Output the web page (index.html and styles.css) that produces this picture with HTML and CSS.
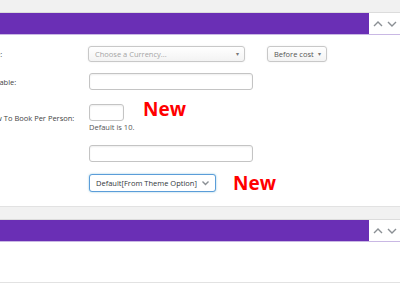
FILE: index.html
```html
<!DOCTYPE html>
<html lang="en">
<head>
  <meta charset="UTF-8" />
  <meta name="viewport" content="width=device-width, initial-scale=1.0"/>
  <title>Tour Options</title>
  <link rel="stylesheet" href="styles.css">
</head>
<body>
  <div class="postbox">
    <div class="postbox-top"></div>
    <div class="postbox-head">
      <div class="postbox-title"></div>
      <div class="postbox-arrows">
        <svg width="12" height="8" viewBox="0 0 12 8"><polyline points="2,6 6,2 10,6" /></svg>
        <svg width="12" height="8" viewBox="0 0 12 8"><polyline points="2,2 6,6 10,2" /></svg>
      </div>
    </div>

    <div class="postbox-body">
      <div class="row row-currency">
        <label>Price:</label>
        <div class="select select-wide"><span class="placeholder">Choose a Currency...</span><span class="caret">▾</span></div>
        <div class="select select-small"><span>Before cost</span><span class="caret">▾</span></div>
      </div>

      <div class="row row-seats">
        <label>Available:</label>
        <input type="text" class="input input-wide">
      </div>

      <div class="row row-allow">
        <label>Allow To Book Per Person:</label>
        <div class="field">
          <div class="field-line">
            <input type="text" class="input input-tiny">
            <span class="new-badge">New</span>
          </div>
          <p class="description">Default is 10.</p>
        </div>
      </div>

      <div class="row row-link">
        <label>Tag:</label>
        <input type="text" class="input input-wide">
      </div>

      <div class="row row-layout">
        <label>Lay:</label>
        <div class="select select-focus"><span>Default[From Theme Option]</span>
          <svg class="chev" width="9" height="6" viewBox="0 0 9 6"><polyline points="1.5,1.5 4.5,4.5 7.5,1.5" /></svg>
        </div>
        <span class="new-badge new-badge-2">New</span>
      </div>
    </div>
  </div>

  <div class="postbox">
    <div class="postbox-top"></div>
    <div class="postbox-head">
      <div class="postbox-title"></div>
      <div class="postbox-arrows">
        <svg width="12" height="8" viewBox="0 0 12 8"><polyline points="2,6 6,2 10,6" /></svg>
        <svg width="12" height="8" viewBox="0 0 12 8"><polyline points="2,2 6,6 10,2" /></svg>
      </div>
    </div>
    <div class="postbox-body postbox-empty"></div>
  </div>
</body>
</html>
```

FILE: styles.css
```css
* {
  box-sizing: border-box;
  margin: 0;
  padding: 0;
}

body {
  background: #fff;
  font-family: 'Open Sans', sans-serif;
  font-size: 7.5px;
  color: #444;
  overflow: hidden;
  width: 400px;
  height: 284px;
}

.postbox {
  border-bottom: 1px solid #e2e2e2;
}

.postbox-top {
  height: 13px;
  background: #f1f1f1;
  border-bottom: 1px solid #dcdcdc;
}

.postbox-head {
  display: flex;
  height: 22px;
  border-bottom: 1px solid #c9b8e4;
}

.postbox-title {
  width: 369px;
  background: #6a2fb5;
}

.postbox-arrows {
  flex: 1;
  display: flex;
  align-items: center;
  gap: 2px;
  padding-left: 3px;
}

.postbox-arrows svg polyline,
.chev polyline {
  fill: none;
  stroke: #8a8f94;
  stroke-width: 1.4;
}

.postbox-body {
  height: 171px;
  padding-top: 11px;
  margin-left: -17px;
}

.postbox-empty {
  height: 40px;
}

.row {
  display: flex;
  align-items: flex-start;
}

.row label {
  width: 105px;
  flex-shrink: 0;
  color: #444;
  font-size: 7.5px;
  white-space: nowrap;
}

.row-currency {
  height: 16px;
  margin-bottom: 11px;
  align-items: center;
}

.row-seats {
  height: 17px;
  margin-bottom: 14px;
  align-items: center;
}

.row-allow {
  height: 29px;
  margin-bottom: 12px;
}

.row-allow label {
  margin-top: 9px;
}

.row-link {
  height: 16px;
  margin-bottom: 13px;
  align-items: center;
}

.row-layout {
  height: 18px;
  align-items: center;
}

.select {
  display: flex;
  align-items: center;
  justify-content: space-between;
  height: 16px;
  padding: 0 5px 0 6px;
  border: 1px solid #c8c8c8;
  border-radius: 3px;
  background: linear-gradient(#fff, #f3f3f3);
  box-shadow: 0 0 2px rgba(0, 0, 0, 0.08);
  color: #555;
  white-space: nowrap;
}

.select-wide {
  width: 157px;
}

.select-small {
  width: 60px;
  margin-left: 22px;
}

.placeholder {
  color: #a5a5a5;
}

.caret {
  font-size: 6px;
  color: #777;
}

.select-focus {
  width: 127px;
  height: 18px;
  margin-left: 1px;
  background: #fff;
  border-color: #5b9dd9;
  box-shadow: 0 0 2px rgba(30, 140, 190, 0.5);
  color: #32373c;
  font-size: 7.5px;
  padding: 0 5px 0 6px;
}

.input {
  display: block;
  height: 17px;
  margin-left: 1px;
  border: 1px solid #c4c4c4;
  border-radius: 3px;
  box-shadow: inset 0 1px 2px rgba(0, 0, 0, 0.07);
  background: #fff;
}

.input-wide {
  width: 164px;
}

.input-tiny {
  width: 35px;
}

.field-line {
  display: flex;
  align-items: center;
}

.description {
  margin-left: 1px;
  margin-top: 1px;
  font-size: 7.5px;
  color: #555;
  line-height: 11px;
}

.new-badge {
  margin-left: 19px;
  margin-top: -7px;
  color: #ff0000;
  font-family: 'Open Sans', sans-serif;
  font-weight: bold;
  font-size: 19px;
  line-height: 20px;
}

.new-badge-2 {
  margin-left: 17px;
  margin-top: -1px;
}
```
